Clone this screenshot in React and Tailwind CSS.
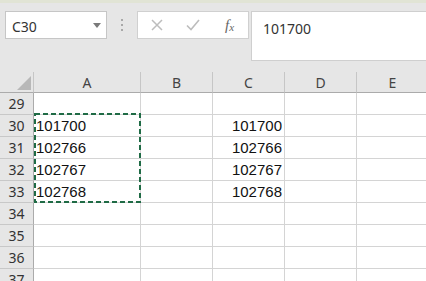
import React from "react";

const rows = [
  { n: 29, a: "", c: "" },
  { n: 30, a: "101700", c: "101700" },
  { n: 31, a: "102766", c: "102766" },
  { n: 32, a: "102767", c: "102767" },
  { n: 33, a: "102768", c: "102768" },
  { n: 34, a: "", c: "" },
  { n: 35, a: "", c: "" },
  { n: 36, a: "", c: "" },
  { n: 37, a: "", c: "" },
];

const ui = { fontFamily: '"Noto Sans", "Open Sans", sans-serif' };
const cellFont = { fontFamily: '"Liberation Sans", Arial, sans-serif' };

export default function App() {
  return (
    <div className="w-[426px] h-[281px] overflow-hidden bg-white flex flex-col" style={ui}>
      <div className="h-[3px] bg-[#e1e4d5] shrink-0" />
      <div className="h-[69px] shrink-0 bg-[#e6e6e6] flex items-start pt-[8px] overflow-hidden">
        <div className="ml-[5px] w-[102px] h-[28px] shrink-0 bg-white border border-[#c6c6c6] flex items-center justify-between pl-[6px] pr-[5px] pt-[3px]">
          <span className="text-[14px] leading-[18px] text-[#333]">C30</span>
          <svg width="8" height="5" viewBox="0 0 8 5" className="mb-[3px]">
            <path d="M0 0 L8 0 L4 5 Z" fill="#7a7a7a" />
          </svg>
        </div>
        <div className="w-[30px] h-[28px] shrink-0 flex flex-col items-center justify-center gap-[3px]">
          <div className="w-[2px] h-[2px] bg-[#a8a8a8]" />
          <div className="w-[2px] h-[2px] bg-[#a8a8a8]" />
          <div className="w-[2px] h-[2px] bg-[#a8a8a8]" />
        </div>
        <div className="w-[112px] h-[28px] shrink-0 bg-white border border-[#d0d0d0] flex items-center">
          <div className="w-[37px] flex justify-center">
            <svg width="12" height="12" viewBox="0 0 12 12">
              <path d="M1 1 L11 11 M11 1 L1 11" stroke="#bdbdbd" strokeWidth="1.5" fill="none" />
            </svg>
          </div>
          <div className="w-[36px] flex justify-center">
            <svg width="14" height="12" viewBox="0 0 14 12">
              <path d="M1 6.5 L5 10.5 L13 1" stroke="#bdbdbd" strokeWidth="1.6" fill="none" />
            </svg>
          </div>
          <div className="w-[37px] flex justify-center">
            <span
              className="italic text-[#666] text-[15px] leading-[16px]"
              style={{ fontFamily: '"Liberation Serif", "DejaVu Serif", serif' }}
            >
              f<span className="text-[11px] relative top-[1px]">x</span>
            </span>
          </div>
        </div>
        <div className="ml-[2px] w-[200px] h-[50px] shrink-0 bg-white border border-[#cfcfcf] pl-[11px] pt-[4px]">
          <span className="text-[14px] leading-[20px] text-[#333]">101700</span>
        </div>
      </div>

      <div className="relative flex-1 overflow-hidden">
        <div className="grid grid-cols-[34px_107px_72px_72px_72px_72px] w-[429px]">
          <div className="h-[21px] bg-[#e6e6e6] border-r border-b border-r-[#c6c6c6] border-b-[#ababab] relative">
            <svg width="14" height="14" viewBox="0 0 14 14" className="absolute right-[2px] bottom-[2px]">
              <path d="M14 0 L14 14 L0 14 Z" fill="#b8b8b8" />
            </svg>
          </div>
          {["A", "B", "C", "D", "E"].map((c) => (
            <div
              key={c}
              className="h-[21px] bg-[#e6e6e6] border-r border-b border-r-[#c6c6c6] border-b-[#ababab] flex items-center justify-center text-[14px] text-[#444]"
            >
              {c}
            </div>
          ))}
          {rows.map((r) => (
            <React.Fragment key={r.n}>
              <div className="h-[22px] bg-[#e6e6e6] border-r border-b border-r-[#ababab] border-b-[#c8c8c8] flex items-center justify-center text-[14px] text-[#333]">
                {r.n}
              </div>
              <div
                className="h-[22px] border-r border-b border-[#d4d4d4] pl-[2px] text-[15px] leading-[21px] text-[#111]"
                style={cellFont}
              >
                {r.a}
              </div>
              <div className="h-[22px] border-r border-b border-[#d4d4d4]" />
              <div
                className="h-[22px] border-r border-b border-[#d4d4d4] pr-[2px] text-right text-[15px] leading-[21px] text-[#111]"
                style={cellFont}
              >
                {r.c}
              </div>
              <div className="h-[22px] border-r border-b border-[#d4d4d4]" />
              <div className="h-[22px] border-r border-b border-[#d4d4d4]" />
            </React.Fragment>
          ))}
        </div>
        <svg
          width="107"
          height="90"
          viewBox="0 0 107 90"
          className="absolute left-[34px] top-[41px] pointer-events-none"
        >
          <rect
            x="1"
            y="1"
            width="105"
            height="88"
            fill="none"
            stroke="#1f6b45"
            strokeWidth="2"
            strokeDasharray="5 3"
          />
        </svg>
      </div>
    </div>
  );
}
